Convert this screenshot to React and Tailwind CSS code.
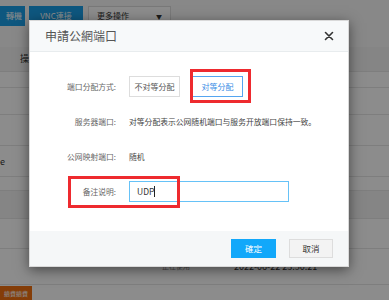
import React from "react";

const font = { fontFamily: '"Noto Sans CJK SC", "Noto Sans CJK TC", "Noto Sans", sans-serif' };

function BgRow({ h, dark, children }) {
  return (
    <div className={`flex items-center border-b border-[#e6e6e6] ${dark ? "bg-[#f2f2f2]" : "bg-white"}`} style={{ height: h }}>
      {children}
    </div>
  );
}

export default function App() {
  return (
    <div className="relative w-[389px] h-[300px] overflow-hidden bg-white" style={font}>
      {/* background page */}
      <div className="flex flex-col w-full h-full">
        <div className="flex items-start gap-[4px] h-[47px] pt-[6px] bg-[#f7f7f7]">
          <div className="w-[25px] h-[20px] bg-[#1a9fe8] text-white text-[8px] flex items-center justify-end pr-[3px]">轉機</div>
          <div className="w-[54px] h-[20px] bg-[#1a9fe8] text-white text-[8px] flex items-center justify-center">VNC連接</div>
          <div className="ml-[1px] w-[83px] h-[20px] bg-white border border-[#ddd] text-[#333] text-[8px] flex items-center justify-between px-[8px]">
            <span>更多操作</span>
            <span className="text-[6px]">▼</span>
          </div>
        </div>
        <BgRow h={25} dark>
          <span className="ml-[20px] text-[9px] text-[#333]">操</span>
        </BgRow>
        <BgRow h={16} />
        <BgRow h={27} />
        <BgRow h={32} />
        <BgRow h={31}>
          <span className="text-[9px] text-[#333]">e</span>
        </BgRow>
        <BgRow h={14} />
        <BgRow h={28} dark />
        <BgRow h={30} />
        <div className="relative flex-1 bg-white">
          <div className="flex items-center h-[36px] border-b border-[#e6e6e6]">
            <span className="ml-[162px] text-[7px] text-[#888]">正在使用</span>
            <span className="ml-[44px] text-[9px] text-[#333]">2022-06-22 23:50:21</span>
          </div>
          <div className="mt-[1px] w-[32px] h-[14px] bg-[#f07010] text-white text-[6px] flex items-center justify-center">續費續費</div>
        </div>
      </div>

      {/* overlay */}
      <div className="absolute inset-0 bg-black/45" />

      {/* modal */}
      <div className="absolute left-[29px] top-[20px] w-[320px] h-[247px] bg-white flex flex-col shadow-[0_3px_12px_rgba(0,0,0,0.5)] border border-[#d9d9d9]">
        <div className="h-[31px] bg-[#f7f9fa] border-b border-[#e8ecee] flex items-center justify-between pl-[15px] pr-[14px]">
          <span className="text-[12px] text-[#555]">申請公網端口</span>
          <svg width="10" height="10" viewBox="0 0 10 10">
            <path d="M1.5 1.5 L8.5 8.5 M8.5 1.5 L1.5 8.5" stroke="#333" strokeWidth="1.6" strokeLinecap="round" />
          </svg>
        </div>

        <div className="flex-1 flex flex-col gap-[14px] pt-[24px] text-[7.8px]">
          <div className="relative grid grid-cols-[86px_1fr] gap-x-[13px] items-center h-[21px]">
            <span className="text-right text-[#666]">端口分配方式:</span>
            <div className="flex items-center gap-[12px]">
              <div className="w-[51px] h-[21px] border border-[#ddd] text-[#555] text-[8px] flex items-center justify-center">不对等分配</div>
              <div className="relative">
                <div className="w-[51px] h-[21px] border border-[#55a5f0] text-[#3a8ee6] text-[8px] flex items-center justify-center bg-white">对等分配</div>
                <div className="absolute left-[-2px] top-[-7px] w-[61px] h-[34px] border-[3px] border-[#ee2a2f]" />
              </div>
            </div>
          </div>

          <div className="grid grid-cols-[86px_1fr] gap-x-[13px] items-center h-[21px]">
            <span className="text-right text-[#666]">服务器端口:</span>
            <span className="text-[#444] whitespace-nowrap">对等分配表示公网随机端口与服务开放端口保持一致。</span>
          </div>

          <div className="grid grid-cols-[86px_1fr] gap-x-[13px] items-center h-[21px]">
            <span className="text-right text-[#666]">公网映射端口:</span>
            <span className="text-[#444]">随机</span>
          </div>

          <div className="relative grid grid-cols-[86px_1fr] gap-x-[13px] items-center h-[21px]">
            <span className="text-right text-[#666]">备注说明:</span>
            <div className="w-[160px] h-[21px] border border-[#66c2f7] flex items-center pl-[7px] text-[#333] text-[8.5px]">
              <span>UDP</span>
              <span className="w-[1px] h-[11px] bg-[#222]" />
            </div>
            <div className="absolute left-[38px] top-[-5px] w-[112px] h-[32px] border-[3px] border-[#ee2a2f]" />
          </div>
        </div>

        <div className="h-[35px] bg-[#f5f7f8] flex items-center justify-end gap-[13px] pr-[15px]">
          <div className="w-[45px] h-[19px] bg-[#12a8fa] text-white text-[8.5px] flex items-center justify-center">確定</div>
          <div className="w-[44px] h-[19px] bg-[#f3f3f3] border border-[#ddd] text-[#333] text-[8.5px] flex items-center justify-center">取消</div>
        </div>
      </div>
    </div>
  );
}
